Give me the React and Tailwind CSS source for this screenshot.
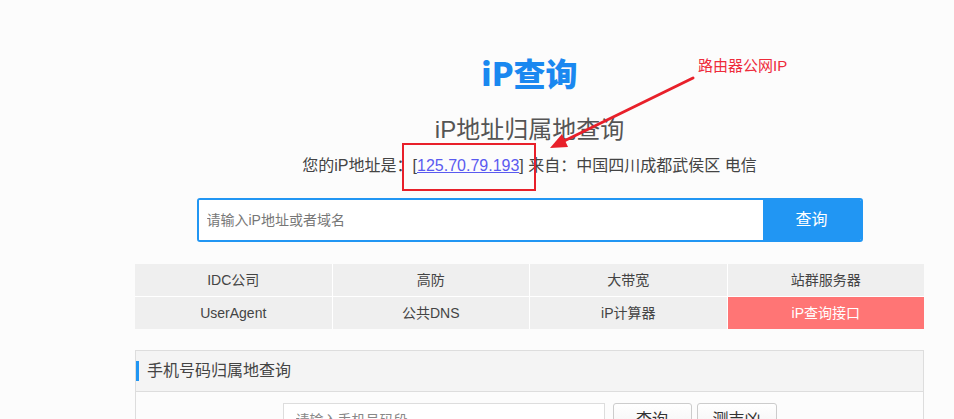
import React from 'react';

const links = [
    { name: 'IDC公司' },
    { name: '高防' },
    { name: '大带宽' },
    { name: '站群服务器' },
    { name: 'UserAgent' },
    { name: '公共DNS' },
    { name: 'iP计算器' },
    { name: 'iP查询接口', active: true },
];

const App = () => {
    return (
        <div className="relative min-h-screen overflow-hidden bg-[#fcfcfc] text-[#444] font-['Liberation_Sans','Noto_Sans_CJK_SC',sans-serif]">
            <div className="ml-[135px] w-[789px] flex flex-col items-center pt-[50px]">
                <h1 className="text-[32px] leading-[45px] font-black text-[#1a88f0] font-['Noto_Sans_CJK_SC',sans-serif]">iP查询</h1>
                <h2 className="mt-[19px] text-[24px] leading-[32px] text-[#555]">iP地址归属地查询</h2>
                <p className="mt-[8px] text-[16px] leading-[24px] text-[#444]">
                    您的iP地址是：[<a href="#" className="text-[#5a5af0] underline">125.70.79.193</a>] 来自：中国四川成都武侯区 电信
                </p>

                <div className="mt-[20px] flex w-[666px] h-[44px] rounded-[3px] border-2 border-[#2196f3] overflow-hidden bg-white">
                    <input
                        type="text"
                        placeholder="请输入iP地址或者域名"
                        className="flex-1 px-[8px] text-[14px] text-[#333] placeholder:text-[#777] outline-none bg-white"
                    />
                    <button className="w-[98px] bg-[#2196f3] text-white text-[16px]">查询</button>
                </div>

                <div className="mt-[22px] grid grid-cols-4 gap-[1px] w-full bg-white">
                    {links.map((link) => (
                        <a
                            key={link.name}
                            href="#"
                            className={`h-[32px] flex items-center justify-center text-[14px] ${link.active ? 'bg-[#ff7575] text-white' : 'bg-[#efefef] text-[#444]'}`}
                        >
                            {link.name}
                        </a>
                    ))}
                </div>

                <div className="mt-[21px] w-full border border-[#ddd] bg-[#fcfcfc]">
                    <div className="h-[41px] flex items-center bg-[#f4f4f4] border-b border-[#ddd]">
                        <span className="w-[3px] h-[20px] bg-[#2196f3]"></span>
                        <span className="ml-[8px] text-[16px] text-[#444]">手机号码归属地查询</span>
                    </div>
                    <div className="flex justify-center items-start pt-[11px] pb-[12px]">
                        <input
                            type="text"
                            placeholder="请输入手机号码段"
                            className="w-[322px] h-[34px] border border-[#ddd] px-[12px] text-[14px] placeholder:text-[#888] outline-none bg-white"
                        />
                        <button className="ml-[8px] w-[79px] h-[34px] rounded-[3px] border border-[#ccc] bg-gradient-to-b from-white to-[#f0f0f0] text-[16px] text-[#333]">查询</button>
                        <button className="ml-[5px] w-[80px] h-[34px] rounded-[3px] border border-[#ccc] bg-gradient-to-b from-white to-[#f0f0f0] text-[16px] text-[#333]">测吉凶</button>
                    </div>
                </div>
            </div>

            {/* annotation overlay */}
            <div className="absolute left-[402px] top-[143px] w-[134px] h-[48px] border-2 border-[#e8202a]"></div>
            <span className="absolute left-[698px] top-[55px] text-[15px] leading-[22px] text-[#ee2b3b]">路由器公网IP</span>
            <svg className="absolute left-0 top-0 pointer-events-none" width="954" height="419">
                <line x1="693" y1="78" x2="562" y2="142" stroke="#e8202a" strokeWidth="3" strokeLinecap="round" />
                <polygon points="550,148 562,134 568,147" fill="#e8202a" />
            </svg>
        </div>
    );
};

export default App;
